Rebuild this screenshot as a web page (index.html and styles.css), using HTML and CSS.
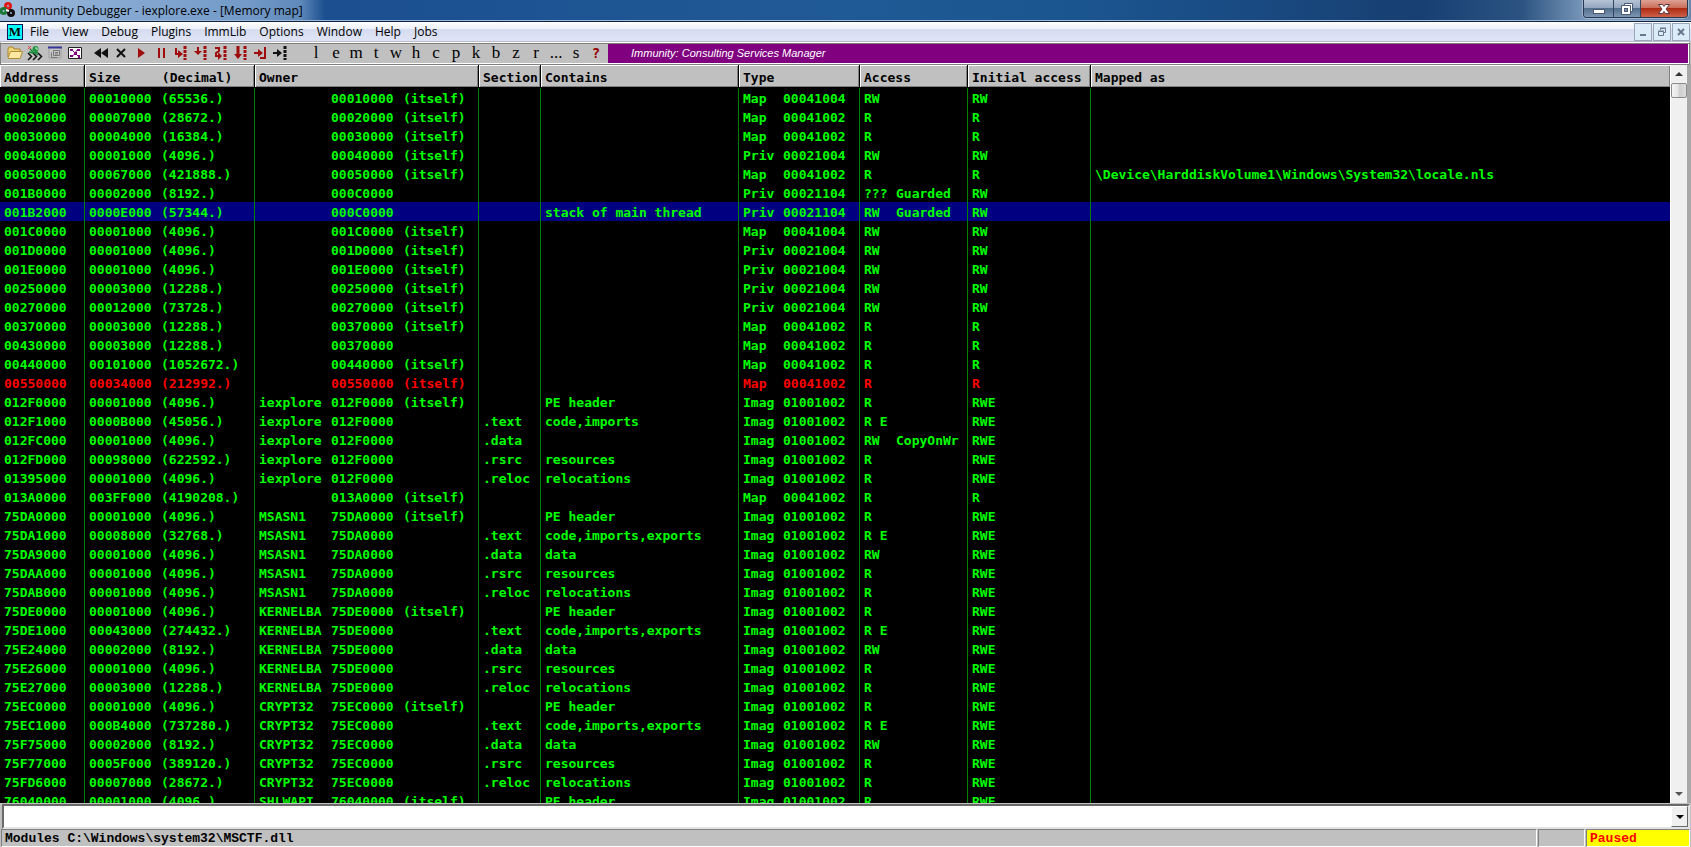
FILE: index.html
```
<!DOCTYPE html>
<html lang="en">
<head>
<meta charset="utf-8">
<title>Immunity Debugger - iexplore.exe - [Memory map]</title>
<link rel="stylesheet" href="styles.css">
</head>
<body>
<header class="titlebar">
  <svg class="app-icon" width="16" height="16" viewBox="0 0 16 16"><g fill="none" stroke-width="3"><circle cx="8" cy="4" r="2.500" stroke="#e01818"/><circle cx="3.500" cy="9" r="2.500" stroke="#1b7a35"/><circle cx="11" cy="11" r="2.500" stroke="#111"/></g><path d="M6 8l3 1" stroke="#fff" stroke-width="2"/></svg>
  <h1 class="title">Immunity Debugger - iexplore.exe - [Memory map]</h1>
  <div class="captions">
    <button class="cap cap-min" aria-label="Minimize"><svg width="14" height="14" viewBox="0 0 14 14"><rect x="1.500" y="7.500" width="11" height="4" fill="#fff" stroke="#4a5870"/></svg></button>
    <button class="cap cap-max" aria-label="Restore"><svg width="14" height="14" viewBox="0 0 14 14"><path d="M4.500 1.500h8v8h-2v3h-9v-9h3z" fill="#fff" stroke="#4a5870"/><rect x="4.500" y="6.500" width="3" height="3" fill="#8090a8" stroke="#4a5870"/><path d="M4.500 3.500h6v6" fill="none" stroke="#4a5870"/></svg></button>
    <button class="cap cap-close" aria-label="Close"><svg width="14" height="14" viewBox="0 0 14 14"><path d="M1.500 2.500h4l1.500 2 1.500-2h4l-3.500 4.500 3.500 4.500h-4l-1.500-2-1.500 2h-4l3.500-4.500z" fill="#fff" stroke="#5a3840"/></svg></button>
  </div>
</header>

<div class="menubar">
  <span class="doc-icon">M</span>
  <nav class="menus">
    <button>File</button><button>View</button><button>Debug</button><button>Plugins</button><button>ImmLib</button><button>Options</button><button>Window</button><button>Help</button><button>Jobs</button>
  </nav>
  <div class="mdi">
    <button aria-label="Minimize document"><svg width="12" height="12" viewBox="0 0 12 12"><path d="M3 8h6v2H3z" fill="#68788c"/></svg></button>
    <button aria-label="Restore document"><svg width="12" height="12" viewBox="0 0 12 12"><path d="M4.500 4V2.500h5v4H8M4 2h6M2.500 5.500h5v4h-5zM2 5h6" fill="none" stroke="#68788c"/></svg></button>
    <button aria-label="Close document"><svg width="12" height="12" viewBox="0 0 12 12"><path d="M3 3l6 6M9 3l-6 6" stroke="#68788c" stroke-width="2"/></svg></button>
  </div>
</div>

<div class="toolbar">
  <div class="tools files">
    <button aria-label="Open"><svg viewBox="0 0 16 16"><path d="M1 12V4l1-2h4l1 2h6v3" fill="#f0d478" stroke="#a8842c"/><path d="M1 13L3.500 6.500h12L13 13.500H1.500z" fill="#ffe9a2" stroke="#b08c34"/></svg></button>
    <button aria-label="Attach"><svg viewBox="0 0 16 16"><path d="M1 8l3.500 3.500L1 15M6 8l3.500 3.500L6 15M11 8l3.500 3.500L11 15" fill="none" stroke="#111" stroke-width="1.500"/><path d="M3 4l4 4 4-1M6 8l-4-1M8 7l3 3" fill="none" stroke="#16883a" stroke-width="1.500"/><circle cx="8.500" cy="4" r="3" fill="#1d9440"/><path d="M8 3h2v2" fill="none" stroke="#d8e8d8"/><path d="M1 1l3 3M4 1L1 4" stroke="#e04040"/></svg></button>
    <button aria-label="Windows"><svg viewBox="0 0 16 16"><path d="M2 2h12v11H2z" fill="#c4c4c4" stroke="#a0a0a0"/><path d="M1 2.500h14" stroke="#37379a" stroke-width="2"/><path d="M6.500 5.500h6v5h-6zM4.500 7.500v5h6M8 7.500h3M8 9h3" fill="none" stroke="#777"/></svg></button>
    <button aria-label="Graph"><svg viewBox="0 0 16 16"><path d="M1.500 2.500h13v11h-13z" fill="#fff" stroke="#222"/><path d="M3 4h3v2H3zM10 4h3v2h-3zM7 7h3v3H7zM3 10h3v2H3zM11 10h2v3h-2z" fill="#800080"/><path d="M5 5l4 4M11 4L8 8M5 11l3-2M9 9l3 3" stroke="#800080"/></svg></button>
  </div>
  <div class="tools run">
    <button aria-label="Restart"><svg viewBox="0 0 16 16"><path d="M8 3v10L1 8zM15 3v10L8 8z" fill="#111"/></svg></button>
    <button aria-label="Close program"><svg viewBox="0 0 16 16"><path d="M4 4l8 8M12 4l-8 8" stroke="#111" stroke-width="2"/></svg></button>
    <button aria-label="Run"><svg viewBox="0 0 16 16"><path d="M5 3v10l7-5z" fill="#a00c0c"/></svg></button>
    <button aria-label="Pause"><svg viewBox="0 0 16 16"><path d="M6 3v10M11 3v10" stroke="#a00c0c" stroke-width="2"/></svg></button>
    <button aria-label="Step into"><svg viewBox="0 0 16 16"><path d="M3 3v6h4" fill="none" stroke="#a00c0c" stroke-width="2"/><path d="M5 5l5 4-5 4z" fill="#a00c0c"/><path d="M12 1v14" stroke="#a00c0c" stroke-width="3" stroke-dasharray="3 1"/></svg></button>
    <button aria-label="Step over"><svg viewBox="0 0 16 16"><path d="M5 2v5" stroke="#a00c0c" stroke-width="2"/><path d="M1 6h8l-4 4z" fill="#a00c0c"/><path d="M12 1v14" stroke="#a00c0c" stroke-width="3" stroke-dasharray="3 1"/></svg></button>
    <button aria-label="Trace into"><svg viewBox="0 0 16 16"><path d="M2 3h4v3L3 8v3h3" fill="none" stroke="#a00c0c" stroke-width="2"/><path d="M5 7l4 4-4 4z" fill="#a00c0c"/><path d="M12 1v14" stroke="#a00c0c" stroke-width="3" stroke-dasharray="3 1"/></svg></button>
    <button aria-label="Trace over"><svg viewBox="0 0 16 16"><path d="M5 1v10" stroke="#a00c0c" stroke-width="3"/><path d="M1 9h8l-4 5z" fill="#a00c0c"/><path d="M12 1v14" stroke="#a00c0c" stroke-width="3" stroke-dasharray="3 1"/></svg></button>
    <button aria-label="Execute till return"><svg viewBox="0 0 16 16"><path d="M1 8h5M12 2v11H7" fill="none" stroke="#a00c0c" stroke-width="2"/><path d="M5 4l5 4-5 4z" fill="#a00c0c"/></svg></button>
    <button aria-label="Go to address"><svg viewBox="0 0 16 16"><path d="M0 8h5" stroke="#111" stroke-width="2"/><path d="M4 4l5 4-5 4z" fill="#111"/><path d="M12 1v14" stroke="#111" stroke-width="3" stroke-dasharray="3 1"/></svg></button>
  </div>
  <div class="tools letters">
    <button>l</button><button>e</button><button>m</button><button>t</button><button>w</button><button>h</button><button>c</button><button>p</button><button>k</button><button>b</button><button>z</button><button>r</button><button>...</button><button>s</button><button class="help">?</button>
  </div>
  <div class="banner">Immunity: Consulting Services Manager</div>
</div>

<main class="map">
  <div class="map-view">
    <table>
      <colgroup><col class="c-addr"><col class="c-size"><col class="c-owner"><col class="c-sect"><col class="c-cont"><col class="c-type"><col class="c-acc"><col class="c-init"><col></colgroup>
      <thead><tr><th>Address</th><th><span class="f9">Size</span> <span>(Decimal)</span></th><th>Owner</th><th>Section</th><th>Contains</th><th>Type</th><th>Access</th><th>Initial access</th><th>Mapped as</th></tr></thead>
      <tbody id="rows"></tbody>
    </table>
  </div>
  <div class="scroll">
    <button aria-label="Scroll up"><svg width="8" height="4" viewBox="0 0 8 4"><path d="M0 4l4-4 4 4z" fill="#333"/></svg></button>
    <div class="thumb"></div>
    <button class="down" aria-label="Scroll down"><svg width="8" height="4" viewBox="0 0 8 4"><path d="M0 0h8L4 4z" fill="#555"/></svg></button>
  </div>
</main>

<div class="command">
  <input type="text" aria-label="Command">
  <button aria-label="Command history"><svg width="8" height="4" viewBox="0 0 8 4"><path d="M0 0h8L4 4z" fill="#000"/></svg></button>
</div>

<footer class="status">
  <div class="pane message">Modules C:\Windows\system32\MSCTF.dll</div>
  <div class="pane spare"></div>
  <div class="pane state">Paused</div>
</footer>
<script src="app.js"></script>
</body>
</html>
```

FILE: styles.css
```
* { box-sizing: border-box; }
body {
  margin: 0;
  height: 100vh;
  display: flex;
  flex-direction: column;
  overflow: hidden;
  background: #c0c0c0;
  font: 12px/18px "Open Sans", "Noto Sans", sans-serif;
  color: #000;
}
button { font: inherit; color: inherit; margin: 0; padding: 0; border: 0; background: none; }
svg { display: block; flex: none; }

.titlebar {
  display: flex;
  align-items: flex-start;
  gap: 4px;
  height: 22px;
  padding-right: 3px;
  border-bottom: 1px solid #10233f;
  box-shadow: inset 0 -1px #9db7d8;
  background: linear-gradient(90deg, #a3bddc 0, #8badd5 90px, #7299c7 250px, #5f8abb 300px, #1b4f90 325px, #205a96 50%, #1b5590 64%, #173f72 84%, #2c5381 90%, #7f9dbf 94%, #6888ae 100%);
}
.app-icon { margin-top: 2px; }
.title { flex: 1; margin: 1px 0 0; font-size: 12px; line-height: 19px; font-weight: 400; white-space: nowrap; }
.captions { display: flex; height: 18px; border: 1px solid #26374f; border-top: 0; border-radius: 0 0 4px 4px; box-shadow: 0 0 0 1px #9fb4cd; overflow: hidden; }
.cap { display: flex; align-items: center; justify-content: center; background: linear-gradient(#b6c3d5 0, #93a7c0 45%, #54708f 50%, #7c96b2 100%); }
.cap-min { width: 29px; }
.cap-max { width: 27px; border-left: 1px solid #34465f; }
.cap-close { width: 47px; border-left: 1px solid #34465f; background: linear-gradient(#dda194 0, #cb6f5c 45%, #ad2b12 50%, #d0604a 100%); }

.menubar {
  display: flex;
  align-items: center;
  height: 20px;
  padding: 0 1px 0 7px;
  background: linear-gradient(#fff 0, #edf0f8 35%, #d6dcef 40%, #dee4f5 90%);
  border-bottom: 1px solid #b8bdca;
}
.doc-icon { width: 16px; height: 16px; border: 1px solid #115; background: #0ff; font: 700 13px/14px "Liberation Serif", serif; text-align: center; }
.menus { display: flex; flex: 1; gap: 13px; padding-left: 7px; }
.mdi { display: flex; gap: 1px; }
.mdi button { display: flex; align-items: center; justify-content: center; width: 18px; height: 18px; border: 1px solid #98a8b8; background: #dcebf8; }

.toolbar {
  display: flex;
  height: 23px;
  padding: 1px 0 0 4px;
  margin-right: 1px;
  border: 1px solid #808080;
  border-top-color: #fff;
  box-shadow: inset 0 1px #808080, inset -1px -1px #fff;
}
.tools { display: flex; align-items: flex-start; flex: none; }
.tools button { display: flex; align-items: center; justify-content: center; width: 20px; height: 18px; }
.tools svg { width: 16px; height: 16px; }
.run { margin-left: 6px; }
.letters { margin-left: 15px; font: 17px/18px "Liberation Serif", serif; }
.letters .help { font: 700 14px/18px "DejaVu Sans Mono", monospace; color: #900; }
.banner { flex: 1; margin: 0 1px 1px 2px; padding-left: 23px; background: #800080; color: #fff; font: italic 11px/18px "Liberation Sans", sans-serif; }

.map { flex: 1; min-height: 0; display: flex; padding-right: 4px; background: #a8a8a8; }
.map-view { flex: 1; min-width: 0; overflow: hidden; background: #000; }
table { width: 100%; table-layout: fixed; border-collapse: separate; border-spacing: 0; font: 700 13px/17px "DejaVu Sans Mono", monospace; color: #0f0; }
.c-addr { width: 85px; }
.c-size { width: 170px; }
.c-owner { width: 224px; }
.c-sect { width: 62px; }
.c-cont { width: 198px; }
.c-type { width: 121px; }
.c-acc { width: 108px; }
.c-init { width: 123px; }
th, td { text-align: left; vertical-align: top; white-space: pre; font-weight: 700; }
th { height: 22px; padding: 4px 0 0 4px; line-height: 18px; background: #c0c0c0; color: #000; border-right: 1px solid #000; box-shadow: inset 1px 1px #fff, inset -1px -1px #808080; }
td { height: 19px; padding: 2px 0 0 4px; border-right: 1px solid #008000; }
th:last-child, td:last-child { border-right: 0; }
tbody::before { content: ""; display: table-row; height: 1px; }
.selected td { background: #000080; }
.changed td { color: #f00; }
.f4, .f5, .f9 { display: inline-block; height: 17px; vertical-align: top; }
.f4 { width: 32px; }
.f5 { width: 40px; }
.f9 { width: 72px; }
th .f9 { width: 65px; }

.scroll { display: flex; flex-direction: column; width: 17px; background: #f0f0f0; border-left: 1px solid #fff; }
.scroll button { display: flex; align-items: center; justify-content: center; height: 18px; }
.thumb { height: 15px; border: 1px solid #8c8c8c; border-radius: 2px; background: linear-gradient(90deg, #f5f5f5, #e4e4e4 45%, #cdcdcd 50%, #dedede); }
.scroll .down { margin-top: auto; }

.command { display: flex; height: 25px; margin: 1px 1px 0 2px; border: 2px solid #696969; border-right-color: #e3e3e3; border-bottom-color: #e3e3e3; background: #fff; }
.command input { flex: 1; min-width: 0; border: 0; padding: 0 4px; outline: 0; background: #fff; font: inherit; }
.command button { display: flex; align-items: center; justify-content: center; width: 17px; border: 1px solid #fff; border-right-color: #696969; border-bottom-color: #696969; background: #f0f0f0; }

.status { display: flex; gap: 1px; height: 18px; padding: 0 1px; font: 700 13px/17px "Liberation Mono", monospace; }
.pane { border: 1px solid #808080; border-right-color: #fff; border-bottom-color: #fff; padding-left: 3px; white-space: nowrap; }
.message { flex: 1; }
.spare { width: 47px; }
.state { width: 104px; background: #ff0; color: #f00; }
```

FILE: app.js
```
// address | size | decimal | owner name | owner base | itself | section | contains | type | type code | access | access note | initial | mapped
const data = `00010000|00010000|65536||00010000|1|||Map|00041004|RW||RW|
00020000|00007000|28672||00020000|1|||Map|00041002|R||R|
00030000|00004000|16384||00030000|1|||Map|00041002|R||R|
00040000|00001000|4096||00040000|1|||Priv|00021004|RW||RW|
00050000|00067000|421888||00050000|1|||Map|00041002|R||R|\\Device\\HarddiskVolume1\\Windows\\System32\\locale.nls
001B0000|00002000|8192||000C0000||||Priv|00021104|???|Guarded|RW|
001B2000|0000E000|57344||000C0000|||stack of main thread|Priv|00021104|RW|Guarded|RW|
001C0000|00001000|4096||001C0000|1|||Map|00041004|RW||RW|
001D0000|00001000|4096||001D0000|1|||Priv|00021004|RW||RW|
001E0000|00001000|4096||001E0000|1|||Priv|00021004|RW||RW|
00250000|00003000|12288||00250000|1|||Priv|00021004|RW||RW|
00270000|00012000|73728||00270000|1|||Priv|00021004|RW||RW|
00370000|00003000|12288||00370000|1|||Map|00041002|R||R|
00430000|00003000|12288||00370000||||Map|00041002|R||R|
00440000|00101000|1052672||00440000|1|||Map|00041002|R||R|
00550000|00034000|212992||00550000|1|||Map|00041002|R||R|
012F0000|00001000|4096|iexplore|012F0000|1||PE header|Imag|01001002|R||RWE|
012F1000|0000B000|45056|iexplore|012F0000||.text|code,imports|Imag|01001002|R E||RWE|
012FC000|00001000|4096|iexplore|012F0000||.data||Imag|01001002|RW|CopyOnWr|RWE|
012FD000|00098000|622592|iexplore|012F0000||.rsrc|resources|Imag|01001002|R||RWE|
01395000|00001000|4096|iexplore|012F0000||.reloc|relocations|Imag|01001002|R||RWE|
013A0000|003FF000|4190208||013A0000|1|||Map|00041002|R||R|
75DA0000|00001000|4096|MSASN1|75DA0000|1||PE header|Imag|01001002|R||RWE|
75DA1000|00008000|32768|MSASN1|75DA0000||.text|code,imports,exports|Imag|01001002|R E||RWE|
75DA9000|00001000|4096|MSASN1|75DA0000||.data|data|Imag|01001002|RW||RWE|
75DAA000|00001000|4096|MSASN1|75DA0000||.rsrc|resources|Imag|01001002|R||RWE|
75DAB000|00001000|4096|MSASN1|75DA0000||.reloc|relocations|Imag|01001002|R||RWE|
75DE0000|00001000|4096|KERNELBA|75DE0000|1||PE header|Imag|01001002|R||RWE|
75DE1000|00043000|274432|KERNELBA|75DE0000||.text|code,imports,exports|Imag|01001002|R E||RWE|
75E24000|00002000|8192|KERNELBA|75DE0000||.data|data|Imag|01001002|RW||RWE|
75E26000|00001000|4096|KERNELBA|75DE0000||.rsrc|resources|Imag|01001002|R||RWE|
75E27000|00003000|12288|KERNELBA|75DE0000||.reloc|relocations|Imag|01001002|R||RWE|
75EC0000|00001000|4096|CRYPT32|75EC0000|1||PE header|Imag|01001002|R||RWE|
75EC1000|000B4000|737280|CRYPT32|75EC0000||.text|code,imports,exports|Imag|01001002|R E||RWE|
75F75000|00002000|8192|CRYPT32|75EC0000||.data|data|Imag|01001002|RW||RWE|
75F77000|0005F000|389120|CRYPT32|75EC0000||.rsrc|resources|Imag|01001002|R||RWE|
75FD6000|00007000|28672|CRYPT32|75EC0000||.reloc|relocations|Imag|01001002|R||RWE|
76040000|00001000|4096|SHLWAPI|76040000|1||PE header|Imag|01001002|R||RWE|`;

const field = (cls, text) => `<span class="${cls}">${text}</span>`;
const rowClass = { "001B2000": "selected", "00550000": "changed" };

document.getElementById("rows").innerHTML = data.split("\n").map(line => {
  const [addr, size, dec, name, base, self, sect, cont, type, code, acc, note, init, mapped] = line.split("|");
  const cells = [
    addr,
    field("f9", size) + `(${dec}.)`,
    field("f9", name) + field("f9", base) + (self ? "(itself)" : ""),
    sect,
    cont,
    field("f5", type) + code,
    note ? field("f4", acc) + note : acc,
    init,
    mapped
  ];
  return `<tr class="${rowClass[addr] || ""}">${cells.map(c => `<td>${c}</td>`).join("")}</tr>`;
}).join("");
```
